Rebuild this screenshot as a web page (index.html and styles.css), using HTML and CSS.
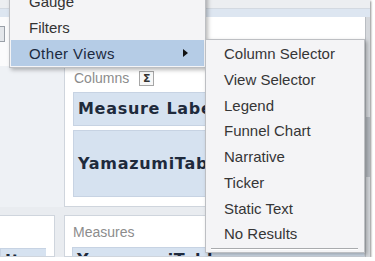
FILE: index.html
```html
<!DOCTYPE html>
<html>
<head>
<meta charset="utf-8">
<link rel="stylesheet" href="styles.css">
</head>
<body>
<div class="page">
  <div class="topbar"><div class="band"></div></div>
  <div class="workspace">
    <div class="lefttop"><span class="tool"></span></div>
    <div class="toparea"></div>
    <div class="scroll"><span class="thumb"></span></div>

    <div class="leftmid"></div>
    <div class="panel columns">
      <div class="panel-head">
        <span class="label">Columns</span>
        <span class="sigma">Σ</span>
      </div>
      <div class="cell label-cell">Measure Labels</div>
      <div class="cell table-cell">YamazumiTable</div>
    </div>

    <div class="panel leftpanel">
      <div class="cell small-cell">Item</div>
    </div>
    <div class="panel measures">
      <div class="panel-head">
        <span class="label">Measures</span>
      </div>
      <div class="cell measure-cell">YamazumiTable</div>
    </div>
  </div>

  <div class="menu main-menu">
    <div class="item">Gauge</div>
    <div class="item">Filters</div>
    <div class="item active">Other Views <span class="arrow"></span></div>
  </div>

  <div class="menu sub-menu">
    <div class="item">Column Selector</div>
    <div class="item">View Selector</div>
    <div class="item">Legend</div>
    <div class="item">Funnel Chart</div>
    <div class="item">Narrative</div>
    <div class="item">Ticker</div>
    <div class="item">Static Text</div>
    <div class="item">No Results</div>
    <div class="sep"></div>
  </div>
</div>
</body>
</html>
```

FILE: styles.css
```css
html, body {
  margin: 0;
  padding: 0;
  background: #ffffff;
}

.page {
  position: relative;
  width: 370px;
  height: 257px;
  overflow: hidden;
  background: #e9ecf0;
  box-shadow: 1px 1px 2px rgba(0, 0, 0, 0.45);
  font-family: "Liberation Sans", Arial, sans-serif;
}

.topbar {
  height: 17px;
  box-sizing: border-box;
  background: #eceef1;
  padding-top: 8px;
  border-bottom: 1px solid #cdd5df;
}

.band {
  height: 8px;
  background: #dde6f1;
  border-top: 1px solid #d3d9e1;
}

.workspace {
  display: grid;
  grid-template-columns: 55px 9px 1fr 5px;
  grid-template-rows: 49px 141px 8px 42px;
  height: 240px;
}

.lefttop {
  grid-column: 1 / 2;
  grid-row: 1;
  background: #fbfbfc;
  padding-top: 9px;
}

.tool {
  display: block;
  width: 4px;
  height: 14px;
  border: 1px solid #9aa0a8;
  border-left: none;
  background: #e4e7eb;
}

.toparea {
  grid-column: 2 / 4;
  grid-row: 1;
  background: #ffffff;
}

.scroll {
  grid-column: 4;
  grid-row: 1 / 5;
  background: #d5d8dc;
  border-left: 1px solid #b9bdc2;
  padding-top: 100px;
}

.thumb {
  display: block;
  height: 60px;
  background: #b4b9bf;
}

.leftmid {
  grid-column: 1 / 3;
  grid-row: 2;
  background: #eef1f5;
}

.panel {
  background: #ffffff;
  border: 1px solid #cfd5dd;
  box-sizing: border-box;
  overflow: hidden;
}

.columns {
  grid-column: 3;
  grid-row: 2;
  padding: 1px 0 0 8px;
  display: flex;
  flex-direction: column;
  gap: 4px;
}

.measures {
  grid-column: 3;
  grid-row: 4;
  padding: 6px 0 0 7px;
  display: flex;
  flex-direction: column;
  gap: 5px;
}

.leftpanel {
  grid-column: 1;
  grid-row: 4;
  border-left: none;
  padding-top: 32px;
}

.panel-head {
  display: flex;
  align-items: center;
  gap: 10px;
  height: 20px;
  flex: none;
}

.label {
  color: #8c8c8c;
  font-size: 14px;
  padding-left: 1px;
}

.sigma {
  width: 13px;
  height: 13px;
  border: 1px solid #a6a6a6;
  background: #f7f7f7;
  font-family: "DejaVu Sans", sans-serif;
  font-weight: bold;
  font-size: 11px;
  line-height: 13px;
  text-align: center;
  color: #333;
}

.cell {
  background: #d6e2f0;
  border: 1px solid #c7d3e3;
  border-right: none;
  font-family: "DejaVu Sans", Verdana, sans-serif;
  font-weight: bold;
  font-size: 16px;
  letter-spacing: 0.7px;
  color: #1e2a3c;
  white-space: nowrap;
  padding-left: 4px;
  box-sizing: border-box;
  flex: none;
}

.label-cell {
  height: 34px;
  line-height: 32px;
}

.table-cell {
  height: 67px;
  line-height: 65px;
}

.measure-cell {
  height: 30px;
  padding-top: 2px;
}

.small-cell {
  width: 46px;
  height: 30px;
  padding-top: 2px;
}

.menu {
  position: absolute;
  box-sizing: border-box;
  background: #f4f4f6;
  border: 1px solid #bdbfc3;
  box-shadow: 2px 2px 4px rgba(0, 0, 0, 0.28);
  font-size: 15px;
  color: #333333;
}

.main-menu {
  left: 9px;
  top: -14px;
  width: 197px;
  padding: 1px;
}

.main-menu .item {
  height: 26px;
  line-height: 27px;
  padding-left: 18px;
  position: relative;
}

.main-menu .active {
  background: #b5cce6;
  color: #1b2a40;
  letter-spacing: 0.4px;
}

.arrow {
  position: absolute;
  right: 16px;
  top: 9px;
  width: 0;
  height: 0;
  border-top: 4px solid transparent;
  border-bottom: 4px solid transparent;
  border-left: 5px solid #111;
}

.sub-menu {
  left: 205px;
  top: 39px;
  width: 160px;
  height: 214px;
  padding-top: 1px;
  background: #f4f4f6;
}

.sub-menu .item {
  height: 25.75px;
  line-height: 25.75px;
  padding-left: 18px;
  color: #363636;
}

.sep {
  margin: 1px 6px 0 5px;
  height: 1px;
  background: #a9abae;
  border-bottom: 1px solid #ffffff;
}
```
